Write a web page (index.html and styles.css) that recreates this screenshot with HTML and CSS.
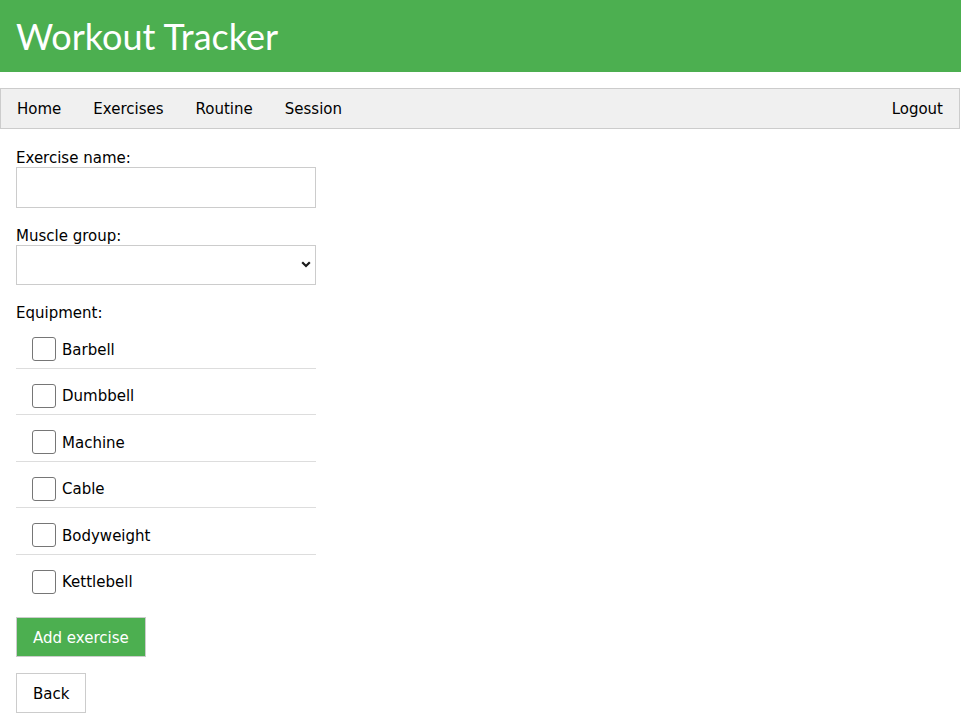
FILE: index.html
```html
<!DOCTYPE html>
<html lang="en">
<head>
<meta charset="utf-8">
<title>Workout Tracker</title>
<link rel="stylesheet" href="styles.css">
</head>
<body>
<header class="app-header">
  <h1 class="app-title">Workout Tracker</h1>
</header>
<nav class="nav">
  <div class="nav-left">
    <a class="nav-link" href="#">Home</a>
    <a class="nav-link" href="#">Exercises</a>
    <a class="nav-link" href="#">Routine</a>
    <a class="nav-link" href="#">Session</a>
  </div>
  <a class="nav-link" href="#">Logout</a>
</nav>
<main class="main">
  <form class="form">
    <div class="field">
      <label class="field-label" for="name">Exercise name:</label>
      <input class="text-input" id="name" type="text">
    </div>
    <div class="field">
      <label class="field-label" for="group">Muscle group:</label>
      <div class="select-wrap">
        <select class="select" id="group"><option></option></select>
        <svg class="select-arrow" width="10" height="7" viewBox="0 0 10 7"><path d="M1.2 1.2 L5 5 L8.8 1.2" fill="none" stroke="#1a1a1a" stroke-width="2.2"/></svg>
      </div>
    </div>
    <div class="field field-last">
      <span class="field-label">Equipment:</span>
      <ul class="check-list">
        <li class="check-row"><label class="check-label"><input class="check" type="checkbox"><span class="check-text">Barbell</span></label></li>
        <li class="check-row"><label class="check-label"><input class="check" type="checkbox"><span class="check-text">Dumbbell</span></label></li>
        <li class="check-row"><label class="check-label"><input class="check" type="checkbox"><span class="check-text">Machine</span></label></li>
        <li class="check-row"><label class="check-label"><input class="check" type="checkbox"><span class="check-text">Cable</span></label></li>
        <li class="check-row"><label class="check-label"><input class="check" type="checkbox"><span class="check-text">Bodyweight</span></label></li>
        <li class="check-row"><label class="check-label"><input class="check" type="checkbox"><span class="check-text">Kettlebell</span></label></li>
      </ul>
    </div>
    <div class="actions">
      <button class="btn btn-primary" type="button">Add exercise</button>
      <button class="btn" type="button">Back</button>
    </div>
  </form>
</main>
</body>
</html>
```
FILE: styles.css
```css
* { box-sizing: border-box; }
html, body { margin: 0; padding: 0; background: #fff; }
body {
  font-family: "DejaVu Sans", Verdana, sans-serif;
  font-size: 15px;
  line-height: 19px;
  color: #000;
}
.app-header {
  background: #4caf50;
  height: 72px;
  padding: 16px 16px;
}
.app-title {
  margin: 0;
  font-family: Lato, "Open Sans", sans-serif;
  font-weight: 400;
  font-size: 36px;
  line-height: 40px;
  color: #fff;
}
.nav {
  margin: 16px 1px 0 0;
  display: flex;
  justify-content: space-between;
  background: #f0f0f0;
  border: 1px solid #cccccc;
}
.nav-left { display: flex; }
.nav-link {
  display: block;
  padding: 11px 16px 9px;
  color: #000;
  text-decoration: none;
}
.main { padding: 19px 16px 0; }
.form { margin: 0; }
.field { margin-bottom: 18px; }
.field-last { margin-bottom: 0; }
.field-label { display: block; padding-top: 1px; line-height: 18px; }
.text-input, .select {
  display: block;
  width: 300px;
  margin: 0;
  border: 1px solid #cccccc;
  border-radius: 0;
  background: #fff;
  font: inherit;
  color: #000;
  outline: none;
}
.text-input { height: 41px; padding: 10px; }
.select {
  height: 40px;
  padding: 0 10px;
  appearance: none;
  -webkit-appearance: none;
}
.select-wrap { position: relative; width: 300px; }
.select-arrow { position: absolute; left: 285px; top: 16px; }
.check-list {
  list-style: none;
  margin: 0;
  padding: 0;
  width: 300px;
}
.check-row {
  padding: 15px 16px 6.5px;
  border-bottom: 1px solid #dddddd;
}
.check-row:last-child { border-bottom: none; }
.check-label { display: flex; align-items: center; }
.check-text { padding-top: 2px; }
.check {
  appearance: none;
  -webkit-appearance: none;
  flex: none;
  width: 24px;
  height: 24px;
  margin: 0 6px 0 0;
  border: 1px solid #767676;
  border-radius: 3px;
  background: #fff;
}
.actions {
  margin-top: 17px;
  display: flex;
  flex-direction: column;
  align-items: flex-start;
  gap: 16px;
}
.btn {
  font: inherit;
  line-height: 18px;
  height: 40px;
  padding: 11px 16px 9px;
  border: 1px solid #cccccc;
  border-radius: 0;
  background: #fff;
  color: #000;
  cursor: pointer;
}
.btn-primary { background: #4caf50; color: #fff; }
```
